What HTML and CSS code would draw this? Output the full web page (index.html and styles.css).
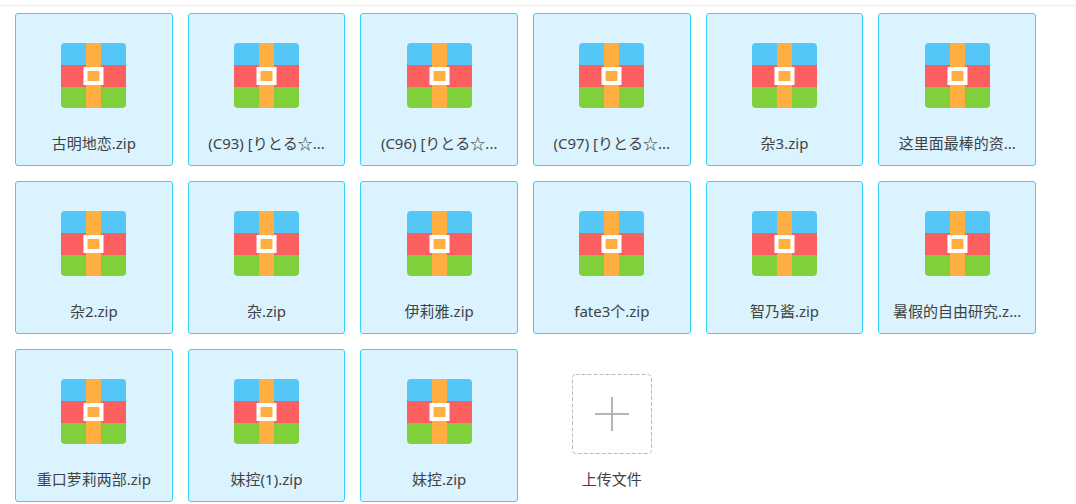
FILE: index.html
```html
<!DOCTYPE html>
<html lang="zh-CN">
<head>
<meta charset="utf-8">
<meta name="viewport" content="width=device-width, initial-scale=1">
<title>文件</title>
<link rel="stylesheet" href="styles.css">
</head>
<body>
<svg class="sprite" aria-hidden="true">
  <symbol id="archive" viewBox="0 0 65 65">
    <path fill="#55c7f7" d="M4 0H61Q65 0 65 4V22H0V4Q0 0 4 0Z"/>
    <path fill="#fb5f5f" d="M0 22H65V44H0Z"/>
    <path fill="#80d03b" d="M0 44H65V61Q65 65 61 65H4Q0 65 0 61Z"/>
    <path fill="#ffaf42" d="M25 0H40V65H25Z"/>
    <rect x="24.500" y="26" width="16" height="14" fill="#ffaf42" stroke="#fff" stroke-width="4"/>
  </symbol>
</svg>
<main class="files">
  <ul class="grid">
    <li><button class="card" type="button"><svg class="icon" aria-hidden="true"><use href="#archive"/></svg><span class="name">古明地恋.zip</span></button></li>
    <li><button class="card" type="button"><svg class="icon" aria-hidden="true"><use href="#archive"/></svg><span class="name">(C93) [りとる☆...</span></button></li>
    <li><button class="card" type="button"><svg class="icon" aria-hidden="true"><use href="#archive"/></svg><span class="name">(C96) [りとる☆...</span></button></li>
    <li><button class="card" type="button"><svg class="icon" aria-hidden="true"><use href="#archive"/></svg><span class="name">(C97) [りとる☆...</span></button></li>
    <li><button class="card" type="button"><svg class="icon" aria-hidden="true"><use href="#archive"/></svg><span class="name">杂3.zip</span></button></li>
    <li><button class="card" type="button"><svg class="icon" aria-hidden="true"><use href="#archive"/></svg><span class="name">这里面最棒的资...</span></button></li>
    <li><button class="card" type="button"><svg class="icon" aria-hidden="true"><use href="#archive"/></svg><span class="name">杂2.zip</span></button></li>
    <li><button class="card" type="button"><svg class="icon" aria-hidden="true"><use href="#archive"/></svg><span class="name">杂.zip</span></button></li>
    <li><button class="card" type="button"><svg class="icon" aria-hidden="true"><use href="#archive"/></svg><span class="name">伊莉雅.zip</span></button></li>
    <li><button class="card" type="button"><svg class="icon" aria-hidden="true"><use href="#archive"/></svg><span class="name">fate3个.zip</span></button></li>
    <li><button class="card" type="button"><svg class="icon" aria-hidden="true"><use href="#archive"/></svg><span class="name">智乃酱.zip</span></button></li>
    <li><button class="card" type="button"><svg class="icon" aria-hidden="true"><use href="#archive"/></svg><span class="name">暑假的自由研究.z...</span></button></li>
    <li><button class="card" type="button"><svg class="icon" aria-hidden="true"><use href="#archive"/></svg><span class="name">重口萝莉两部.zip</span></button></li>
    <li><button class="card" type="button"><svg class="icon" aria-hidden="true"><use href="#archive"/></svg><span class="name">妹控(1).zip</span></button></li>
    <li><button class="card" type="button"><svg class="icon" aria-hidden="true"><use href="#archive"/></svg><span class="name">妹控.zip</span></button></li>
    <li><button class="card upload" type="button"><svg class="plus" viewBox="0 0 80 80" aria-hidden="true"><rect x=".5" y=".5" width="79" height="79" rx="3" fill="none" stroke="#bbb" stroke-dasharray="4 2"/><path d="M23 40H57M40 23V57" fill="none" stroke="#b5b5b5" stroke-width="2"/></svg><span class="name">上传文件</span></button></li>
  </ul>
</main>
</body>
</html>
```
FILE: styles.css
```css
* {
  box-sizing: border-box;
}

body {
  margin: 0;
  background: #fff;
  color: #424242;
  font-family: "Noto Sans", "Noto Sans CJK SC", sans-serif;
  font-size: 15px;
  line-height: 20px;
}

.sprite {
  display: none;
}

.files {
  margin-top: 5px;
  padding: 7px 40px 2px 15px;
  border-top: 1px solid #eee;
}

.grid {
  display: grid;
  grid-template-columns: repeat(6, minmax(0, 1fr));
  gap: 15px;
  margin: 0;
  padding: 0;
  list-style: none;
}

.card {
  display: flex;
  flex-direction: column;
  align-items: center;
  gap: 25px;
  width: 100%;
  padding: 29px 8px 12px;
  border: 1px solid #36d2fa;
  border-radius: 3px;
  background: #daf3ff;
  color: inherit;
  font: inherit;
  cursor: pointer;
}

.icon {
  width: 65px;
  height: 65px;
}

.name {
  max-width: 100%;
  overflow: hidden;
  text-overflow: ellipsis;
  white-space: nowrap;
}

.upload {
  gap: 15px;
  padding-top: 24px;
  border-color: transparent;
  background: transparent;
}

.plus {
  width: 80px;
  height: 80px;
}
```
